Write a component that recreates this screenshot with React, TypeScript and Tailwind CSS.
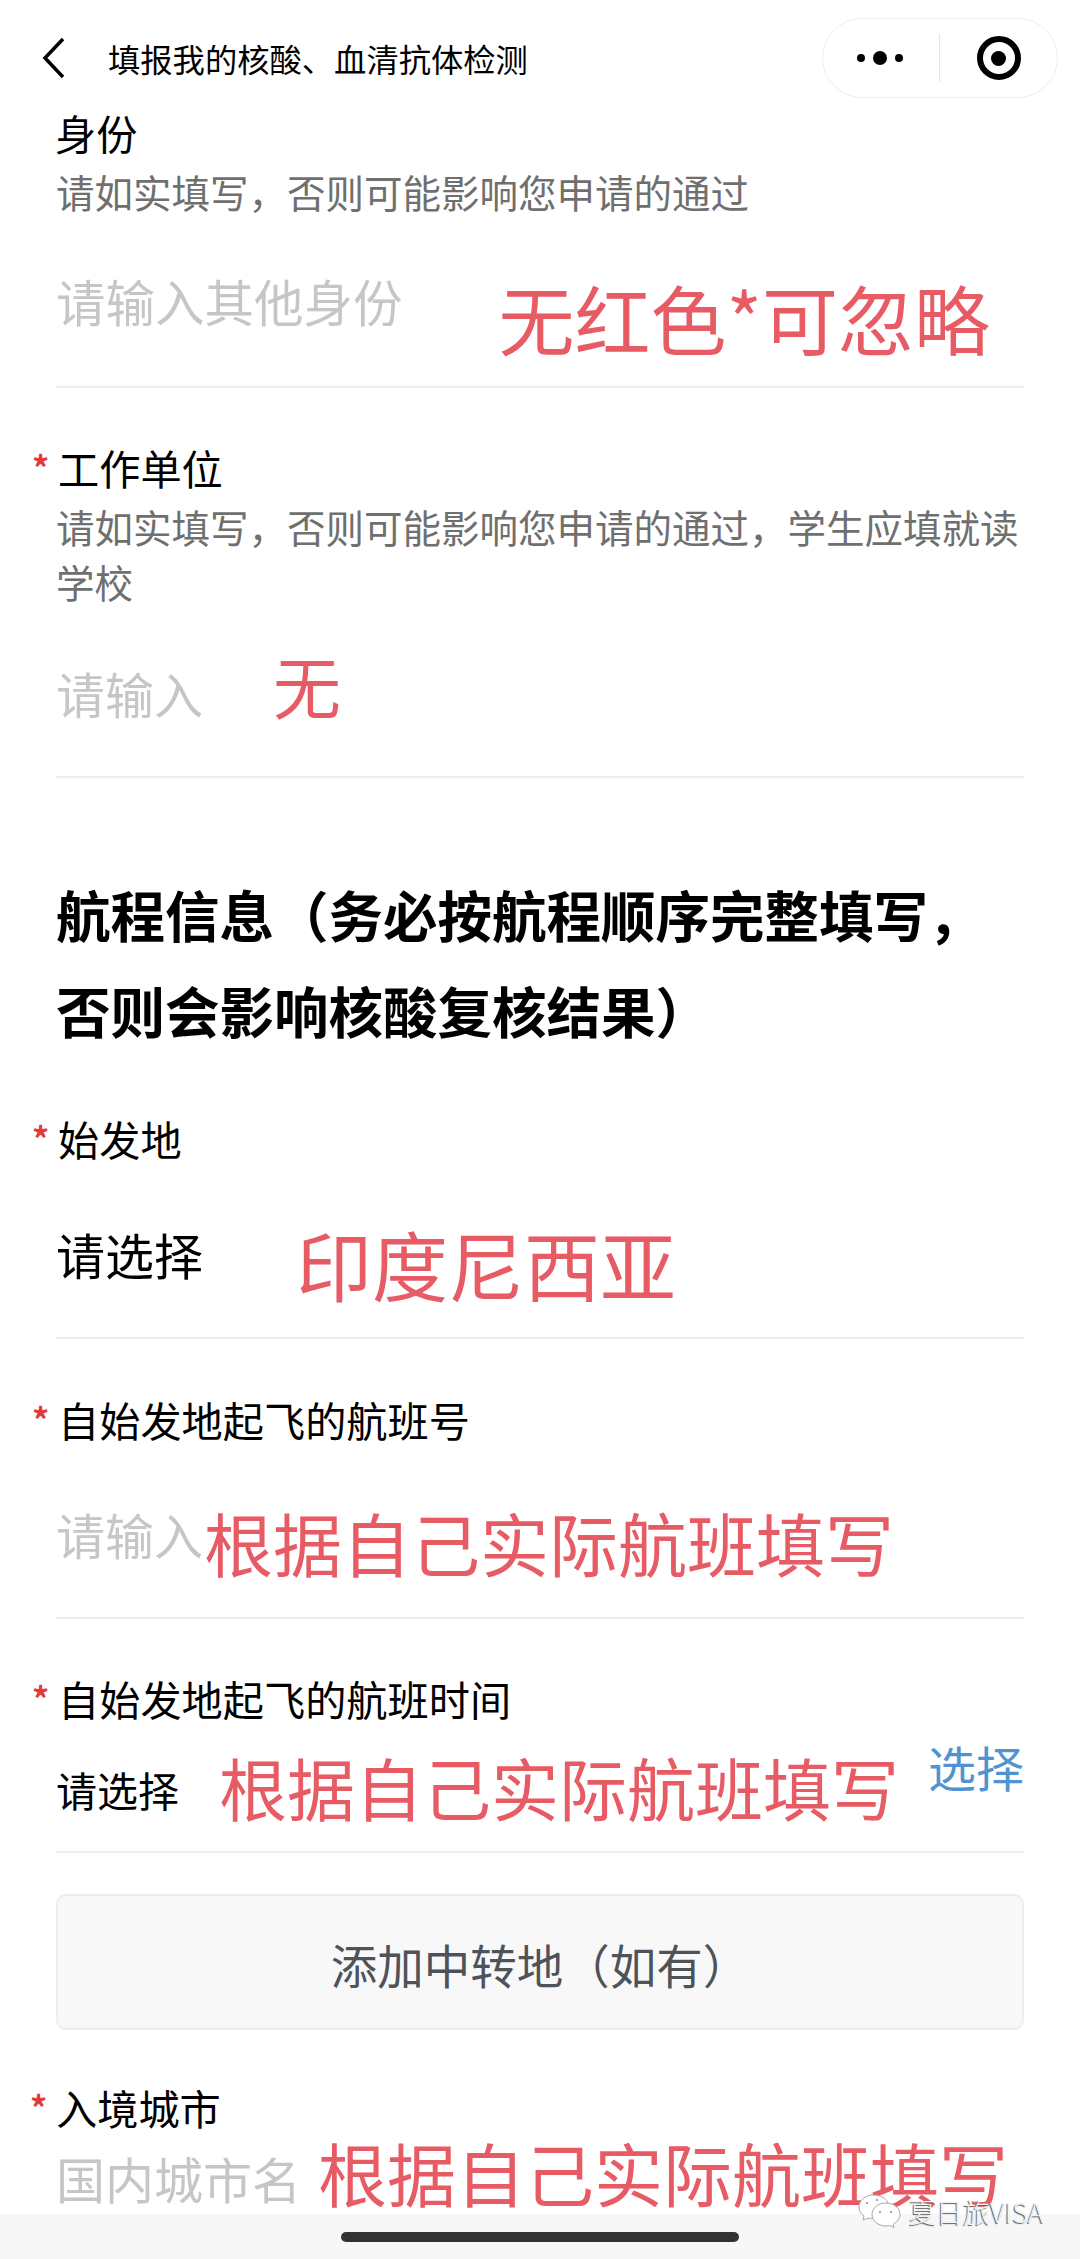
import type { ReactNode } from 'react';

function Label({ required, children }: { required?: boolean; children: ReactNode }) {
  return (
    <div className="relative mt-[-3px] pl-[2px] text-[41.2px] leading-[50px] text-black">
      {required && (
        <span className="absolute left-[-24px] top-[0px] text-[34px] font-bold leading-[50px] text-[#e5383b]">*</span>
      )}
      {children}
    </div>
  );
}

function Note({ className, children }: { className: string; children: ReactNode }) {
  return <span className={`whitespace-nowrap leading-none text-[#e75b65] ${className}`}>{children}</span>;
}

export default function App() {
  return (
    <div className="relative h-[2259px] w-[1080px] overflow-hidden bg-white font-['Noto_Sans_CJK_SC','Noto_Sans',sans-serif]">
      {/* Nav bar */}
      <header className="flex h-[110px] items-center pl-[42px] pr-[22px]">
        <svg width="24" height="42" viewBox="0 0 24 42" fill="none" className="mt-[6px]">
          <path d="M21 2 3 21l18 19" stroke="#000" strokeWidth="3.5" />
        </svg>
        <h1 className="ml-[42px] mt-[6px] flex-1 text-[32.3px] font-normal leading-none text-black">填报我的核酸、血清抗体检测</h1>
        <div className="mt-[6px] flex h-[80px] w-[236px] items-center rounded-[40px] border border-[#eeeeee] bg-white">
          <div className="flex w-[116px] items-center justify-end gap-[8px] pr-[36px]">
            <span className="h-[8px] w-[8px] rounded-full bg-black" />
            <span className="h-[14px] w-[14px] rounded-full bg-black" />
            <span className="h-[8px] w-[8px] rounded-full bg-black" />
          </div>
          <div className="h-[48px] w-px bg-[#e5e5e5]" />
          <div className="flex flex-1 justify-center">
            <div className="flex h-[44px] w-[44px] items-center justify-center rounded-full border-[6px] border-black">
              <span className="h-[15px] w-[15px] rounded-full bg-black" />
            </div>
          </div>
        </div>
      </header>

      <main className="px-[56px]">
        {/* 身份 */}
        <section className="border-b-2 border-[#eeeeee] pb-[48px]">
          <div className="ml-[-3px]">
            <Label>身份</Label>
          </div>
          <p className="mt-[7px] text-[38.5px] leading-[55px] text-[#6f6f6f]">请如实填写，否则可能影响您申请的通过</p>
          <div className="mt-[48px] flex h-[71px] items-start text-[49.5px] leading-[68px] text-[#c4c6c8]">
            <span>请输入其他身份</span>
            <Note className="ml-[96px] mt-[12px] text-[76px]">无红色*可忽略</Note>
          </div>
        </section>

        {/* 工作单位 */}
        <section className="border-b-2 border-[#eeeeee] pb-[49px] pt-[57px]">
          <Label required>工作单位</Label>
          <p className="mt-[7px] text-[38.5px] leading-[55px] text-[#6f6f6f]">
            请如实填写，否则可能影响您申请的通过，学生应填就读学校
          </p>
          <div className="mt-[50px] flex h-[68px] items-start text-[49px] leading-[68px] text-[#c4c6c8]">
            <span>请输入</span>
            <Note className="ml-[70px] mt-[-8px] text-[68px]">无</Note>
          </div>
        </section>

        <h2 className="pt-[88px] text-[54.5px] font-bold leading-[96px] text-black">
          航程信息（务必按航程顺序完整填写，
          <br />
          否则会影响核酸复核结果）
        </h2>

        {/* 始发地 */}
        <section className="border-b-2 border-[#eeeeee] pb-[46px] pt-[58px]">
          <Label required>始发地</Label>
          <div className="mt-[57px] flex h-[71px] items-start text-[49px] leading-[68px] text-black">
            <span>请选择</span>
            <Note className="ml-[93px] mt-[5px] text-[76px]">印度尼西亚</Note>
          </div>
        </section>

        {/* 航班号 */}
        <section className="border-b-2 border-[#eeeeee] pb-[46px] pt-[58px]">
          <Label required>自始发地起飞的航班号</Label>
          <div className="mt-[56px] flex h-[71px] items-start text-[49px] leading-[68px] text-[#c4c6c8]">
            <span>请输入</span>
            <Note className="ml-[1px] mt-[8px] text-[69px]">根据自己实际航班填写</Note>
          </div>
        </section>

        {/* 航班时间 */}
        <section className="border-b-2 border-[#eeeeee] pb-[27px] pt-[57px]">
          <Label required>自始发地起飞的航班时间</Label>
          <div className="mt-[32px] flex h-[69px] items-start text-[41px] leading-[68px] text-black">
            <span>请选择</span>
            <Note className="ml-[40px] mt-[-2px] text-[68px]">根据自己实际航班填写</Note>
            <span className="ml-auto mt-[-23px] text-[48px] leading-[68px] text-[#4f94d0]">选择</span>
          </div>
        </section>

        <button className="mt-[41px] flex h-[136px] w-full items-center justify-center rounded-[10px] border-2 border-[#eceded] bg-[#f8f8f9] pt-[4px] text-[46.5px] text-[#4e5359]">
          添加中转地（如有）
        </button>

        {/* 入境城市 */}
        <section className="mt-[55px]">
          <div className="ml-[-2px]">
            <Label required>入境城市</Label>
          </div>
          <div className="mt-[12px] flex h-[68px] items-start text-[49px] leading-[68px] text-[#c4c6c8]">
            <span>国内城市名</span>
            <Note className="ml-[17px] mt-[-6px] text-[69px]">根据自己实际航班填写</Note>
          </div>
        </section>
      </main>

      {/* Home indicator */}
      <div className="absolute inset-x-0 bottom-0 flex h-[45px] justify-center bg-[#f7f7f7] pt-[18px]">
        <div className="h-[10px] w-[398px] rounded-full bg-[#333333]" />
      </div>

      {/* Watermark */}
      <div className="absolute left-[858px] top-[2194px] flex items-center gap-[7px] text-[27px] font-light leading-[33px] text-[#f4f4f4] [text-shadow:-1px_1px_1px_#555555]">
        <svg width="44" height="34" viewBox="0 0 44 34" fill="#fff" stroke="#a8a8a8" strokeWidth="1">
          <path d="M15 1C7 1 1 6.500 1 13c0 4 2 7 5 9l-1 4 5-2c1 .5 2 .6 3 .7L30 9C28 4 22 1 15 1Z" />
          <path d="M28 9c-8 0-14 5-14 11.500S20 32 28 32c2 0 3-.2 4-.5l4 2-.7-3.500C39 28 42 24.500 42 20.500 42 14 36 9 28 9Z" />
          <circle cx="22" cy="18" r="1" fill="#888" stroke="none" />
          <circle cx="33" cy="18" r="1" fill="#888" stroke="none" />
          <circle cx="9" cy="9" r="1" fill="#888" stroke="none" />
          <circle cx="19" cy="6" r="1" fill="#888" stroke="none" />
        </svg>
        夏日旅VISA
      </div>
    </div>
  );
}
